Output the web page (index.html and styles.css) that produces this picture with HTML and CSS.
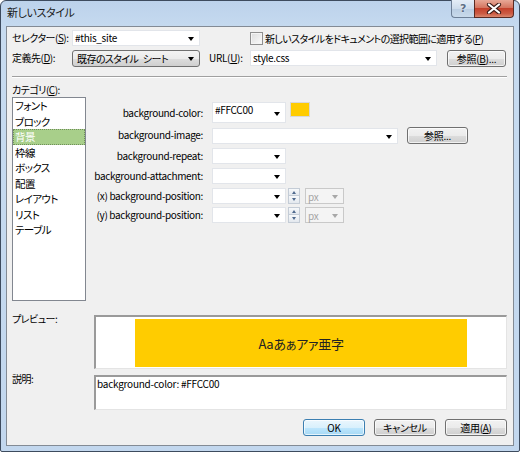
FILE: index.html
```html
<!DOCTYPE html>
<html lang="ja">
<head>
<meta charset="utf-8">
<title>新しいスタイル</title>
<link rel="stylesheet" href="styles.css">
</head>
<body>
<div class="window">
  <div class="titlebar">
    <span class="title">新しいスタイル</span>
    <div class="caption">
      <div class="cap-help">?</div>
      <div class="cap-close">
        <svg width="16" height="11" viewBox="0 0 16 11"><path d="M3 1.5 L13 9.5 M13 1.5 L3 9.5" stroke="#3b1a16" stroke-width="4.2" stroke-linecap="round"/><path d="M3 1.5 L13 9.5 M13 1.5 L3 9.5" stroke="#ffffff" stroke-width="2.2" stroke-linecap="round"/></svg>
      </div>
    </div>
  </div>
  <div class="client">
    <div class="row row1">
      <span class="lbl w60">セレクター(<u>S</u>):</span>
      <div class="combo w128"><span>#this_site</span><i class="arrow"></i></div>
      <div class="check"><span class="cbox"></span><span class="jp">新しいスタイルをドキュメントの選択範囲に適用する(<u>P</u>)</span></div>
    </div>
    <div class="row row2">
      <span class="lbl w60">定義先(<u>D</u>):</span>
      <div class="dropbtn w128"><span class="jp spaced">既存のスタイル シート</span><i class="arrow"></i></div>
      <span class="lbl url">URL(<u>U</u>):</span>
      <div class="combo w187"><span>style.css</span><i class="arrow"></i></div>
      <div class="btn browse">参照(<u>B</u>)...</div>
    </div>
    <div class="sep"></div>
    <div class="cat-label">カテゴリ(<u>C</u>):</div>
    <div class="main">
      <ul class="list">
        <li>フォント</li>
        <li>ブロック</li>
        <li class="sel">背景</li>
        <li>枠線</li>
        <li>ボックス</li>
        <li>配置</li>
        <li>レイアウト</li>
        <li>リスト</li>
        <li>テーブル</li>
      </ul>
      <div class="form">
        <span class="flbl tall">background-color:</span>
        <div class="fcell top">
          <div class="combo w74 tallbox"><span class="toptext">#FFCC00</span><i class="arrow"></i></div>
          <div class="swatch"></div>
        </div>
        <span class="flbl">background-image:</span>
        <div class="fcell">
          <div class="combo w186"><span></span><i class="arrow"></i></div>
          <div class="btn browse2">参照...</div>
        </div>
        <span class="flbl">background-repeat:</span>
        <div class="fcell"><div class="combo w74"><span></span><i class="arrow"></i></div></div>
        <span class="flbl">background-attachment:</span>
        <div class="fcell"><div class="combo w74"><span></span><i class="arrow"></i></div></div>
        <span class="flbl">(x) background-position:</span>
        <div class="fcell">
          <div class="combo w74"><span></span><i class="arrow"></i></div>
          <div class="spin"><span class="up"><i></i></span><span class="down"><i></i></span></div>
          <div class="unit"><span>px</span><i class="arrow dis"></i></div>
        </div>
        <span class="flbl last">(y) background-position:</span>
        <div class="fcell last">
          <div class="combo w74"><span></span><i class="arrow"></i></div>
          <div class="spin"><span class="up"><i></i></span><span class="down"><i></i></span></div>
          <div class="unit"><span>px</span><i class="arrow dis"></i></div>
        </div>
      </div>
    </div>
    <div class="bottom-row preview-row">
      <span class="blbl">プレビュー:</span>
      <div class="sunken preview">
        <div class="sample">Aaあぁアァ亜字</div>
      </div>
    </div>
    <div class="bottom-row desc-row">
      <span class="blbl">説明:</span>
      <div class="sunken desc">background-color: #FFCC00</div>
    </div>
    <div class="buttons">
      <div class="btn dlg default">OK</div>
      <div class="btn dlg">キャンセル</div>
      <div class="btn dlg">適用(<u>A</u>)</div>
    </div>
  </div>
</div>
</body>
</html>
```
FILE: styles.css
```css
* { box-sizing: border-box; }
html, body { margin: 0; padding: 0; }
body {
  width: 520px;
  height: 452px;
  background: #ffffff;
  font-family: "Noto Sans CJK JP", sans-serif;
  font-size: 10px;
  letter-spacing: -0.3px;
  font-feature-settings: "palt";
  color: #000;
}
u { text-decoration: underline; text-underline-offset: 1px; }
.jp { letter-spacing: -0.6px; }
.spaced { word-spacing: 3px; }

.window {
  width: 520px;
  height: 452px;
  border: 1px solid #3d4b5e;
  border-radius: 6px 6px 2px 2px;
  background: linear-gradient(#bcd2eb, #c7dbf0 30px, #c2d7ee);
  display: flex;
  flex-direction: column;
}

.titlebar {
  height: 25px;
  display: flex;
  justify-content: space-between;
  align-items: flex-start;
  padding-left: 6px;
  padding-right: 5px;
}
.title {
  font-size: 11px;
  line-height: 22px;
  color: #1a1a1a;
  letter-spacing: -0.4px;
}
.caption { display: flex; height: 18px; margin-top: -1px; }
.cap-help {
  width: 23px;
  height: 18px;
  border: 1px solid #6d7f96;
  border-right: none;
  border-top: none;
  border-radius: 0 0 0 4px;
  background: linear-gradient(#e4edf7, #cddcec 50%, #b9cde2 51%, #c9daeb);
  color: #5d6f86;
  font-family: "DejaVu Sans", sans-serif;
  font-weight: bold;
  font-size: 11px;
  line-height: 17px;
  text-align: center;
  text-shadow: 0 0 2px #fff;
}
.cap-close {
  width: 40px;
  height: 18px;
  border: 1px solid #5a2a22;
  border-top: none;
  border-radius: 0 0 4px 0;
  background: linear-gradient(#e8a897, #d47560 45%, #c4412c 50%, #cc5b43 80%, #d9876e);
  display: flex;
  align-items: center;
  justify-content: center;
}

.client {
  width: 508px;
  height: 420px;
  margin-left: 5px;
  border: 1px solid #838b95;
  background: #f0f0f0;
  padding: 0 6px 0 5px;
}

.row { display: flex; align-items: center; height: 16px; }
.row1 { margin-top: 3px; }
.row2 { margin-top: 4px; }
.lbl { line-height: 16px; white-space: nowrap; letter-spacing: -0.5px; }
.w60 { width: 60px; }
.url { width: 41px; margin-left: 9px; letter-spacing: -0.3px; }

.combo {
  height: 16px;
  background: #fff;
  border: 1px solid #e2e5ea;
  display: flex;
  align-items: center;
  justify-content: space-between;
  padding: 0 5px 0 2px;
  line-height: 14px;
  white-space: nowrap;
}
.w128 { width: 128px; }
.w187 { width: 187px; }
.w186 { width: 186px; }
.w74 { width: 74px; }
.tallbox { height: 21px; align-items: center; }
.toptext { align-self: flex-start; line-height: 13px; }

.arrow {
  width: 0;
  height: 0;
  border-left: 3.5px solid transparent;
  border-right: 3.5px solid transparent;
  border-top: 4px solid #000;
  margin-top: 2px;
}
.arrow.dis { border-top-color: #a8a8a8; }

.dropbtn {
  height: 17px;
  border: 1px solid #707070;
  border-radius: 3px;
  background: linear-gradient(#f3f3f3, #ebebeb 50%, #dddddd 51%, #cfcfcf);
  display: flex;
  align-items: center;
  justify-content: space-between;
  padding: 0 5px 0 4px;
  white-space: nowrap;
}

.check { display: flex; align-items: center; margin-left: 50px; white-space: nowrap; }
.cbox {
  width: 13px;
  height: 13px;
  border: 1px solid #8f8f8f;
  background: linear-gradient(135deg, #dcdcdc, #fbfbfb);
  box-shadow: inset 0 0 0 1px #f4f4f4;
  margin-right: 2px;
}

.btn {
  height: 17px;
  border: 1px solid #707070;
  border-radius: 3px;
  background: linear-gradient(#f2f2f2, #ebebeb 50%, #dddddd 51%, #cfcfcf);
  display: flex;
  align-items: center;
  justify-content: center;
  white-space: nowrap;
  box-shadow: inset 0 0 0 1px rgba(255,255,255,0.7);
}
.browse { width: 59px; margin-left: 10px; }
.browse2 { width: 61px; margin-left: 9px; }

.sep {
  margin-top: 10px;
  width: 495px;
  height: 2px;
  border-top: 1px solid #a0a0a0;
  border-bottom: 1px solid #ffffff;
}
.cat-label { margin-top: 5px; line-height: 14px; height: 14px; letter-spacing: -0.5px; }

.main { display: flex; align-items: flex-start; }
.list {
  list-style: none;
  margin: 0;
  padding: 0;
  width: 74px;
  height: 204px;
  background: #fff;
  border: 1px solid #828790;
}
.list li {
  height: 15.5px;
  line-height: 15.5px;
  padding-left: 2px;
  white-space: nowrap;
  font-size: 10.5px;
  letter-spacing: -0.6px;
}
.list li.sel {
  background: #a8cf8a;
  color: #fff;
  outline: 1px dotted #6f8e5a;
  outline-offset: -1px;
}

.form {
  display: grid;
  grid-template-columns: 117px auto;
  column-gap: 9px;
  row-gap: 4px;
  margin-top: 5px;
}
.flbl {
  text-align: right;
  line-height: 16px;
  white-space: nowrap;
  letter-spacing: -0.35px;
}
.flbl.tall { line-height: 21px; }
.flbl.last, .fcell.last { margin-top: -1px; }
.fcell { display: flex; align-items: center; }
.fcell.top { align-items: flex-start; }
.swatch {
  width: 20px;
  height: 15px;
  margin-left: 4px;
  background: #ffcc00;
  border: 1px solid #d8d8d8;
}
.spin {
  width: 12px;
  height: 16px;
  margin-left: 2px;
  display: flex;
  flex-direction: column;
}
.spin span {
  height: 8px;
  border: 1px solid #c4ccd6;
  background: linear-gradient(#f7f9fb, #e3e8ee);
  display: flex;
  align-items: center;
  justify-content: center;
}
.spin .down { border-top: none; }
.spin .up i {
  width: 0; height: 0;
  border-left: 2.5px solid transparent;
  border-right: 2.5px solid transparent;
  border-bottom: 3px solid #4f6a8e;
}
.spin .down i {
  width: 0; height: 0;
  border-left: 2.5px solid transparent;
  border-right: 2.5px solid transparent;
  border-top: 3px solid #4f6a8e;
}
.unit {
  width: 39px;
  height: 16px;
  margin-left: 5px;
  border: 1px solid #c9c9c9;
  background: #f4f4f4;
  color: #a5a5a5;
  display: flex;
  align-items: center;
  justify-content: space-between;
  padding: 0 5px 0 2px;
}

.bottom-row { display: flex; align-items: flex-start; }
.preview-row { margin-top: 14px; }
.desc-row { margin-top: 6px; }
.blbl { width: 82px; line-height: 14px; margin-top: -3px; white-space: nowrap; letter-spacing: -0.5px; }
.sunken {
  width: 413px;
  background: #fff;
  border-top: 2px solid #9a9a9a;
  border-left: 2px solid #9a9a9a;
  border-right: 1px solid #e4e4e4;
  border-bottom: 1px solid #e4e4e4;
}
.preview { height: 54px; padding: 2px 0 0 39px; }
.sample {
  width: 332px;
  height: 48px;
  background: #ffcc00;
  display: flex;
  align-items: center;
  justify-content: center;
  font-size: 13px;
  letter-spacing: -0.3px;
  color: #222;
}
.desc {
  height: 35px;
  font-size: 10px;
  line-height: 13px;
  letter-spacing: -0.25px;
  padding: 0 0 0 1px;
}

.buttons {
  display: flex;
  justify-content: flex-end;
  gap: 9px;
  margin-top: 9px;
}
.dlg { width: 62px; }
.default {
  border-color: #3c7fb1;
  background: linear-gradient(#eaf6fd, #d9f0fc 50%, #bee6fd 51%, #a7d9f5);
}
```
